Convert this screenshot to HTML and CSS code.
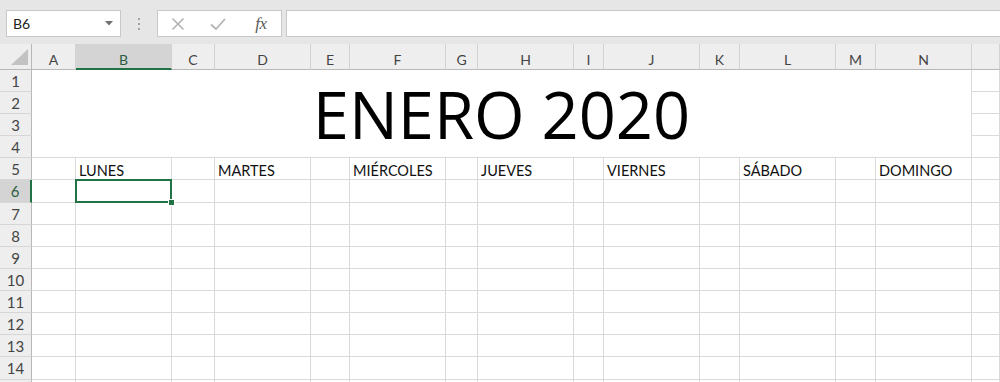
FILE: index.html
```html
<!DOCTYPE html>
<html lang="es">
<head>
<meta charset="utf-8">
<title>ENERO 2020</title>
<link rel="stylesheet" href="styles.css">
</head>
<body>
<div class="toolbar">
  <div class="namebox"><span class="ref">B6</span><svg class="caret" width="8" height="5" viewBox="0 0 8 5"><polygon points="0,0 8,0 4,4.5" fill="#707070"/></svg></div>
  <div class="grip"><i></i><i></i><i></i></div>
  <div class="fxbox">
    <span class="btn"><svg width="14" height="14" viewBox="0 0 14 14"><path d="M1.5 1.5 L12.5 12.5 M12.5 1.5 L1.5 12.5" stroke="#b4b4b4" stroke-width="1.6" fill="none"/></svg></span>
    <span class="btn"><svg width="16" height="14" viewBox="0 0 16 14"><path d="M1 7.5 L6 12 L15 2" stroke="#b4b4b4" stroke-width="1.8" fill="none"/></svg></span>
    <span class="btn fx">fx</span>
  </div>
  <div class="formula"></div>
</div>

<div class="sheet">
  <div class="corner"><svg width="18" height="17" viewBox="0 0 18 17"><polygon points="17,0 17,16 0,16" fill="#c2c2c2"/></svg></div>
  <div class="ch">A</div><div class="ch sel">B</div><div class="ch">C</div><div class="ch">D</div><div class="ch">E</div><div class="ch">F</div><div class="ch">G</div><div class="ch">H</div><div class="ch">I</div><div class="ch">J</div><div class="ch">K</div><div class="ch">L</div><div class="ch">M</div><div class="ch">N</div><div class="ch"></div>

  <div class="title">ENERO 2020</div>
  <div class="rh">1</div><div class="c"></div>
  <div class="rh">2</div><div class="c"></div>
  <div class="rh">3</div><div class="c"></div>
  <div class="rh">4</div><div class="c"></div>

  <div class="rh">5</div><div class="c"></div><div class="c t">LUNES</div><div class="c"></div><div class="c t">MARTES</div><div class="c"></div><div class="c t">MIÉRCOLES</div><div class="c"></div><div class="c t">JUEVES</div><div class="c"></div><div class="c t">VIERNES</div><div class="c"></div><div class="c t">SÁBADO</div><div class="c"></div><div class="c t">DOMINGO</div><div class="c"></div>

  <div class="rh sel">6</div><div class="c"></div><div class="c active"></div><div class="c"></div><div class="c"></div><div class="c"></div><div class="c"></div><div class="c"></div><div class="c"></div><div class="c"></div><div class="c"></div><div class="c"></div><div class="c"></div><div class="c"></div><div class="c"></div><div class="c"></div>

  <div class="rh">7</div><div class="c"></div><div class="c"></div><div class="c"></div><div class="c"></div><div class="c"></div><div class="c"></div><div class="c"></div><div class="c"></div><div class="c"></div><div class="c"></div><div class="c"></div><div class="c"></div><div class="c"></div><div class="c"></div><div class="c"></div>
  <div class="rh">8</div><div class="c"></div><div class="c"></div><div class="c"></div><div class="c"></div><div class="c"></div><div class="c"></div><div class="c"></div><div class="c"></div><div class="c"></div><div class="c"></div><div class="c"></div><div class="c"></div><div class="c"></div><div class="c"></div><div class="c"></div>
  <div class="rh">9</div><div class="c"></div><div class="c"></div><div class="c"></div><div class="c"></div><div class="c"></div><div class="c"></div><div class="c"></div><div class="c"></div><div class="c"></div><div class="c"></div><div class="c"></div><div class="c"></div><div class="c"></div><div class="c"></div><div class="c"></div>
  <div class="rh">10</div><div class="c"></div><div class="c"></div><div class="c"></div><div class="c"></div><div class="c"></div><div class="c"></div><div class="c"></div><div class="c"></div><div class="c"></div><div class="c"></div><div class="c"></div><div class="c"></div><div class="c"></div><div class="c"></div><div class="c"></div>
  <div class="rh">11</div><div class="c"></div><div class="c"></div><div class="c"></div><div class="c"></div><div class="c"></div><div class="c"></div><div class="c"></div><div class="c"></div><div class="c"></div><div class="c"></div><div class="c"></div><div class="c"></div><div class="c"></div><div class="c"></div><div class="c"></div>
  <div class="rh">12</div><div class="c"></div><div class="c"></div><div class="c"></div><div class="c"></div><div class="c"></div><div class="c"></div><div class="c"></div><div class="c"></div><div class="c"></div><div class="c"></div><div class="c"></div><div class="c"></div><div class="c"></div><div class="c"></div><div class="c"></div>
  <div class="rh">13</div><div class="c"></div><div class="c"></div><div class="c"></div><div class="c"></div><div class="c"></div><div class="c"></div><div class="c"></div><div class="c"></div><div class="c"></div><div class="c"></div><div class="c"></div><div class="c"></div><div class="c"></div><div class="c"></div><div class="c"></div>
  <div class="rh">14</div><div class="c"></div><div class="c"></div><div class="c"></div><div class="c"></div><div class="c"></div><div class="c"></div><div class="c"></div><div class="c"></div><div class="c"></div><div class="c"></div><div class="c"></div><div class="c"></div><div class="c"></div><div class="c"></div><div class="c"></div>
  <div class="rh tail"></div><div class="c tail"></div><div class="c tail"></div><div class="c tail"></div><div class="c tail"></div><div class="c tail"></div><div class="c tail"></div><div class="c tail"></div><div class="c tail"></div><div class="c tail"></div><div class="c tail"></div><div class="c tail"></div><div class="c tail"></div><div class="c tail"></div><div class="c tail"></div><div class="c tail"></div>
</div>
</body>
</html>
```

FILE: styles.css
```css
html, body {
  margin: 0;
  padding: 0;
}
body {
  width: 1000px;
  height: 382px;
  overflow: hidden;
  background: #ffffff;
  font-family: Lato, "Open Sans", sans-serif;
  color: #000;
}

/* ---------- formula bar ---------- */
.toolbar {
  height: 44px;
  box-sizing: border-box;
  background: #e6e6e6;
  display: flex;
  align-items: flex-start;
  padding: 10px 0 0 6px;
}
.namebox {
  width: 115px;
  height: 27px;
  box-sizing: border-box;
  background: #fff;
  border: 1px solid #c8c8c8;
  display: flex;
  align-items: center;
  justify-content: space-between;
  padding: 0 7px 0 6px;
  font-size: 14px;
  color: #222;
}
.caret { display: block; }
.grip {
  width: 36px;
  height: 27px;
  display: flex;
  flex-direction: column;
  align-items: center;
  justify-content: center;
  gap: 3px;
}
.grip i {
  display: block;
  width: 2px;
  height: 2px;
  background: #a6a6a6;
}
.fxbox {
  width: 125px;
  height: 27px;
  box-sizing: border-box;
  background: #fff;
  border: 1px solid #c8c8c8;
  display: flex;
  align-items: center;
}
.btn {
  width: 40px;
  height: 25px;
  display: flex;
  align-items: center;
  justify-content: center;
}
.btn svg { display: block; }
.fx {
  font-family: "Liberation Serif", serif;
  font-style: italic;
  font-size: 17px;
  color: #5a5a5a;
  margin-left: 3px;
  letter-spacing: -0.5px;
}
.formula {
  flex: 1;
  height: 27px;
  box-sizing: border-box;
  margin-left: 4px;
  margin-right: -2px;
  background: #fff;
  border: 1px solid #c8c8c8;
}

/* ---------- sheet ---------- */
.sheet {
  display: grid;
  grid-template-columns: 32px 44px 96px 43px 96px 39px 96px 32px 96px 30px 96px 40px 96px 40px 96px 28px;
  grid-template-rows: 26px repeat(5, 22px) 23px repeat(7, 22px) 23px 2px;
  height: 338px;
  overflow: hidden;
}
.corner, .ch, .rh, .c, .title {
  box-sizing: border-box;
}
.corner {
  background: #eeeeee;
  border-right: 1px solid #b8b8b8;
  border-bottom: 1px solid #b8b8b8;
  display: flex;
  align-items: flex-end;
  justify-content: flex-end;
  padding: 0 2px 3px 0;
}
.corner svg { display: block; }
.ch {
  background: #eeeeee;
  border-right: 1px solid #d2d2d2;
  border-bottom: 1px solid #b8b8b8;
  display: flex;
  align-items: center;
  justify-content: center;
  padding-top: 6px;
  font-size: 14px;
  color: #444;
}
.ch.sel {
  background: #d4d4d4;
  border-bottom: 2px solid #217346;
  color: #2b5d40;
}
.rh {
  grid-column: 1;
  background: #eeeeee;
  border-right: 1px solid #b8b8b8;
  border-bottom: 1px solid #d6d6d6;
  display: flex;
  align-items: center;
  justify-content: center;
  font-size: 15px;
  color: #444;
}
.rh.sel {
  background: #d4d4d4;
  border-right: 2px solid #217346;
  color: #2b5d40;
}
.c {
  border-right: 1px solid #dadada;
  border-bottom: 1px solid #dadada;
}
.tail {
  border-bottom: none;
}
.t {
  display: flex;
  align-items: flex-end;
  padding-left: 3px;
  font-size: 14.5px;
  white-space: nowrap;
  color: #111;
}
.title {
  grid-column: 2 / 16;
  grid-row: 2 / 6;
  border-right: 1px solid #dadada;
  border-bottom: 1px solid #dadada;
  display: flex;
  align-items: center;
  justify-content: center;
  font-family: "Open Sans", Lato, sans-serif;
  font-size: 65px;
  color: #000;
}
.active {
  position: relative;
}
.active::after {
  content: "";
  position: absolute;
  left: -1px;
  top: -1px;
  right: -1px;
  bottom: -1px;
  border: 2px solid #217346;
}
.active::before {
  content: "";
  position: absolute;
  right: -4px;
  bottom: -4px;
  width: 5px;
  height: 5px;
  background: #217346;
  border: 1px solid #fff;
  z-index: 2;
}
```
